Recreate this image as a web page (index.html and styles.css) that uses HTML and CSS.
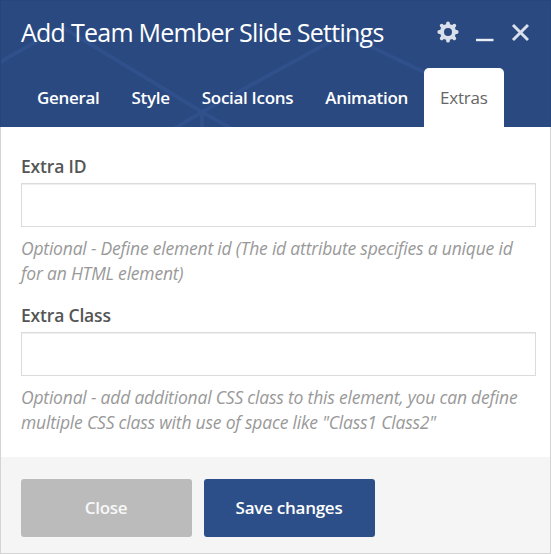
FILE: index.html
```html
<!DOCTYPE html>
<html lang="en">
<head>
<meta charset="utf-8">
<title>Add Team Member Slide Settings</title>
<link rel="stylesheet" href="styles.css">
</head>
<body>
<div class="modal">
  <header class="header">
    <svg class="pattern" width="551" height="127" viewBox="0 0 551 127" fill="none" stroke="#2f508b" stroke-width="4">
      <path d="M0 62L62 27L202 112L344 34L428 74M202 110V130M202 112L172 130M202 112L234 130"/>
    </svg>
    <div class="titlebar">
      <h1 class="title">Add Team Member Slide Settings</h1>
      <div class="controls">
        <svg width="22" height="22" viewBox="-11 -11 22 22">
          <circle r="6" fill="none" stroke="#d9e0eb" stroke-width="4"/>
          <g stroke="#d9e0eb" stroke-width="3.8" stroke-linecap="round">
            <path d="M0-8.7V-7M0 8.7V7M-8.7 0H-7M8.7 0H7M-6.3-6.3L-5-5M6.3 6.3L5 5M-6.3 6.3L-5 5M6.3-6.3L5-5"/>
          </g>
        </svg>
        <svg width="18" height="22" viewBox="0 0 18 22"><path d="M0 19H17.5" stroke="#e9edf4" stroke-width="2.4"/></svg>
        <svg width="18" height="22" viewBox="0 0 18 22"><path d="M2 4L17 19M17 4L2 19" stroke="#d9e0eb" stroke-width="3"/></svg>
      </div>
    </div>
    <nav class="tabs">
      <span class="tab">General</span>
      <span class="tab">Style</span>
      <span class="tab">Social Icons</span>
      <span class="tab">Animation</span>
      <span class="tab active">Extras</span>
    </nav>
  </header>
  <main class="body">
    <div class="field">
      <label class="label" for="eid">Extra ID</label>
      <input class="input" id="eid" type="text">
      <p class="hint">Optional - Define element id (The id attribute specifies a unique id<br>for an HTML element)</p>
    </div>
    <div class="field">
      <label class="label" for="ecl">Extra Class</label>
      <input class="input" id="ecl" type="text">
      <p class="hint">Optional - add additional CSS class to this element, you can define<br>multiple CSS class with use of space like "Class1 Class2"</p>
    </div>
  </main>
  <footer class="footer">
    <button class="button close">Close</button>
    <button class="button save">Save changes</button>
  </footer>
</div>
</body>
</html>
```
FILE: styles.css
```css
* { box-sizing: border-box; }
body { margin: 0; font-family: "Open Sans", sans-serif; }
.modal { width: 551px; height: 554px; display: flex; flex-direction: column; background: #fff; border: 1px solid #d4d4d4; border-top: 0; }
.header { position: relative; height: 127px; margin: 0 -1px; background: #294980; border: 1px solid #27457a; border-bottom: 0; overflow: hidden; }
.pattern { position: absolute; left: -1px; top: -1px; }
.titlebar { position: relative; height: 67px; padding: 0 20px 0 20px; display: flex; justify-content: space-between; }
.title { margin: 0; font-size: 25px; font-weight: 400; line-height: 62px; color: #fff; white-space: nowrap; letter-spacing: -.74px; }
.controls { display: flex; gap: 17px; padding-top: 20px; margin-right: 1px; }
.tabs { position: relative; display: flex; height: 59px; padding-left: 20px; }
.tab { padding: 0 16px; line-height: 59px; font-size: 17px; font-weight: 600; color: #fff; white-space: nowrap; letter-spacing: -.3px; }
.active { background: #fff; color: #666; font-weight: 400; border-radius: 5px 5px 0 0; letter-spacing: -.2px; }
.body { height: 330px; padding: 26px 14px 0 20px; }
.field { height: 149px; }
.label { display: block; height: 30px; line-height: 26px; font-size: 17.5px; font-weight: 600; color: #555; letter-spacing: -.18px; }
.input { display: block; width: 515px; height: 44px; padding: 0 10px; border: 1px solid #dbdbdb; background: #fff; box-shadow: inset 0 1px 1px #eee; outline: 0; font: inherit; }
.hint { margin: 9px 0 0; font-size: 17.5px; line-height: 24.5px; font-style: italic; color: #999; white-space: nowrap; letter-spacing: -.2px; }
.footer { flex: 1; display: flex; gap: 12px; padding: 22px 20px 0; background: #f5f5f5; }
.button { width: 171px; height: 58px; border: 0; border-radius: 3px; padding: 0 1px 2px 0; color: #fff; font: 600 17px "Open Sans", sans-serif; letter-spacing: -.25px; }
.close { background: #bbb; color: #f8f8f8; }
.save { background: #2c4f89; }
```
